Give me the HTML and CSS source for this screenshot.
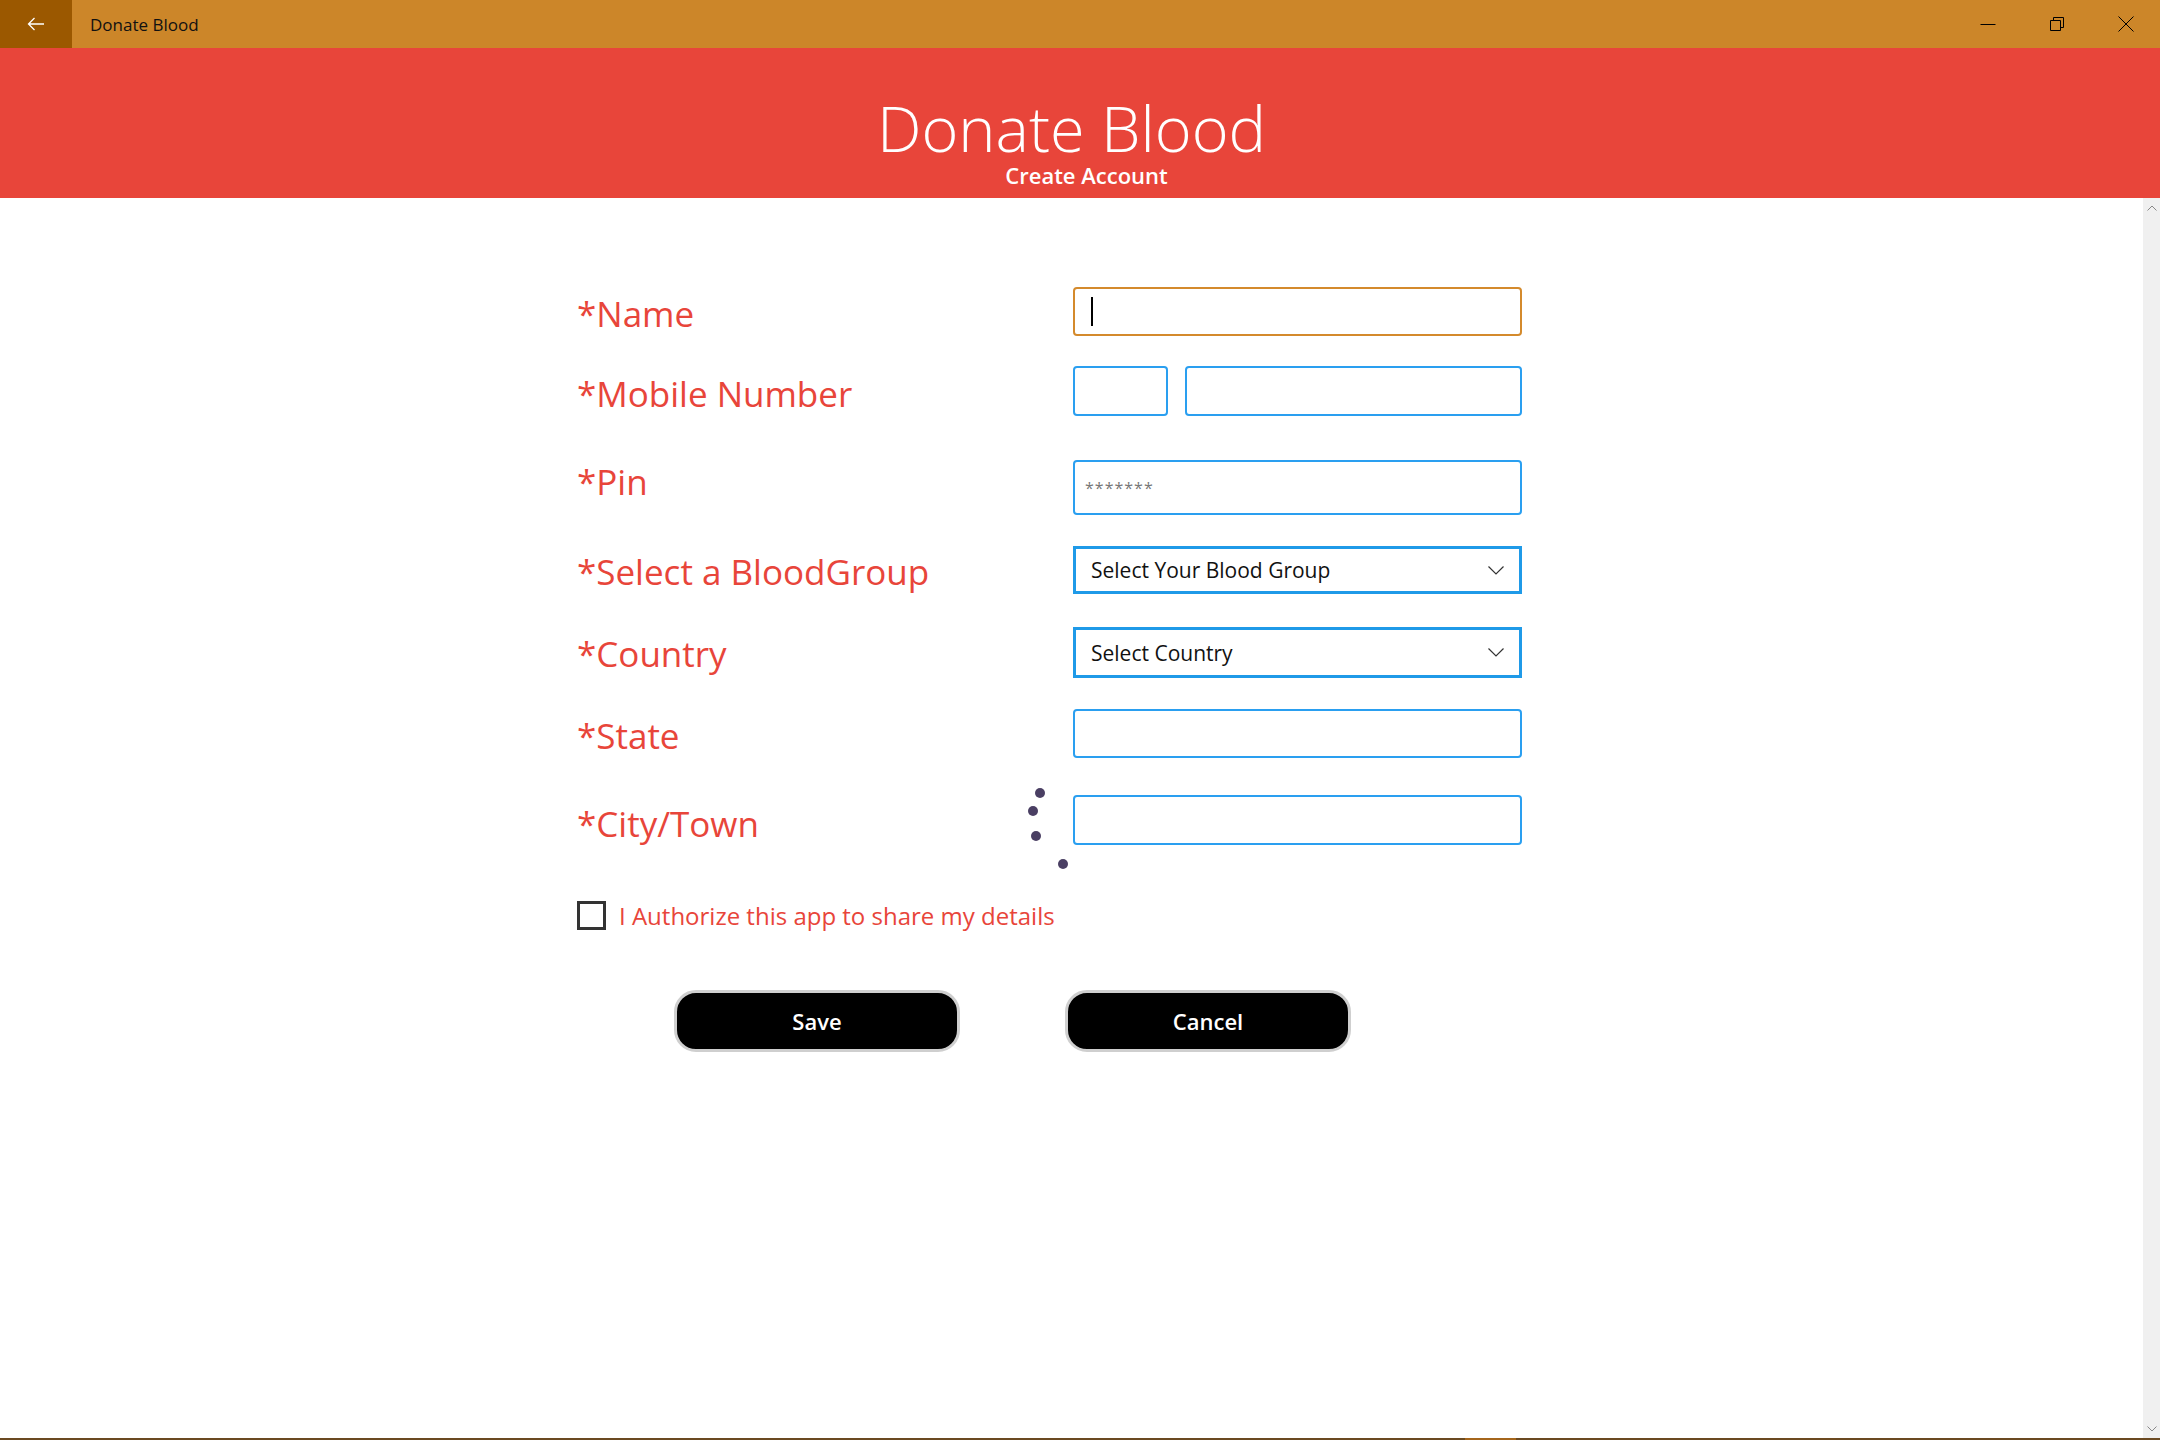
FILE: index.html
```html
<!DOCTYPE html>
<html lang="en">
<head>
    <meta charset="UTF-8">
    <meta name="viewport" content="width=device-width, initial-scale=1.0">
    <title>Donate Blood</title>
    <link rel="stylesheet" href="styles.css">
</head>
<body>
    <div class="window">
        <div class="titlebar">
            <div class="back-btn">
                <svg width="18" height="14" viewBox="0 0 18 14"><path d="M17 7H1.5M7.5 1L1.5 7l6 6" fill="none" stroke="#fff" stroke-width="1.3"/></svg>
            </div>
            <span class="app-title">Donate Blood</span>
            <div class="caption-buttons">
                <div class="caption-btn">
                    <svg width="16" height="16" viewBox="0 0 16 16"><path d="M0.5 8.5h15" stroke="#000" stroke-width="1"/></svg>
                </div>
                <div class="caption-btn">
                    <svg width="16" height="16" viewBox="0 0 16 16"><path d="M1.5 4.5h10v10h-10z M4.5 4.5v-3h10v10h-3" fill="none" stroke="#000" stroke-width="1"/></svg>
                </div>
                <div class="caption-btn">
                    <svg width="16" height="16" viewBox="0 0 16 16"><path d="M0.5 0.5l15 15M15.5 0.5l-15 15" stroke="#000" stroke-width="1"/></svg>
                </div>
            </div>
        </div>

        <header class="banner">
            <h1>Donate Blood</h1>
            <p>Create Account</p>
        </header>

        <div class="body-area">
            <main class="page">
                <form class="signup">
                    <div class="row row-name">
                        <label>*Name</label>
                        <div class="field focused"><span class="caret"></span></div>
                    </div>
                    <div class="row row-mobile">
                        <label>*Mobile Number</label>
                        <div class="mobile-fields">
                            <div class="field code"></div>
                            <div class="field"></div>
                        </div>
                    </div>
                    <div class="row row-pin">
                        <label>*Pin</label>
                        <div class="field"><span class="placeholder">*******</span></div>
                    </div>
                    <div class="row row-blood">
                        <label>*Select a BloodGroup</label>
                        <div class="combo">
                            <span>Select Your Blood Group</span>
                            <svg width="16" height="9" viewBox="0 0 16 9"><path d="M0.5 0.5l7.5 7.5 7.5-7.5" fill="none" stroke="#333" stroke-width="1.2"/></svg>
                        </div>
                    </div>
                    <div class="row row-country">
                        <label>*Country</label>
                        <div class="combo">
                            <span>Select Country</span>
                            <svg width="16" height="9" viewBox="0 0 16 9"><path d="M0.5 0.5l7.5 7.5 7.5-7.5" fill="none" stroke="#333" stroke-width="1.2"/></svg>
                        </div>
                    </div>
                    <div class="row row-state">
                        <label>*State</label>
                        <div class="field"></div>
                    </div>
                    <div class="row row-city">
                        <label>*City/Town</label>
                        <div class="field"></div>
                        <div class="spinner">
                            <span class="dot" style="left: 458px; top: -7px;"></span>
                            <span class="dot" style="left: 451px; top: 11px;"></span>
                            <span class="dot" style="left: 454px; top: 36px;"></span>
                            <span class="dot" style="left: 481px; top: 64px;"></span>
                        </div>
                    </div>

                    <div class="agree">
                        <span class="checkbox"></span>
                        <span class="agree-text">I Authorize this app to share my details</span>
                    </div>

                    <div class="actions">
                        <button type="button" class="btn">Save</button>
                        <button type="button" class="btn">Cancel</button>
                    </div>
                </form>
            </main>
            <div class="scrollbar">
                <svg width="10" height="6" viewBox="0 0 10 6"><path d="M0.5 5.5l4.5-4.5 4.5 4.5" fill="none" stroke="#888" stroke-width="1"/></svg>
                <svg width="10" height="6" viewBox="0 0 10 6"><path d="M0.5 0.5l4.5 4.5 4.5-4.5" fill="none" stroke="#888" stroke-width="1"/></svg>
            </div>
        </div>
        <div class="taskbar-edge"><span class="edge-mark"></span></div>
    </div>
</body>
</html>
```

FILE: styles.css
```css
body {
    margin: 0;
    background-color: white;
    font-family: "Open Sans", "Noto Sans", sans-serif;
    overflow: hidden;
}
.window {
    display: flex;
    flex-direction: column;
    height: 1440px;
}

/* title bar */
.titlebar {
    display: flex;
    align-items: center;
    height: 48px;
    background-color: #cc8629;
    flex-shrink: 0;
}
.back-btn {
    width: 72px;
    height: 48px;
    background-color: #9b5800;
    display: flex;
    align-items: center;
    justify-content: center;
}
.app-title {
    margin-left: 18px;
    font-size: 17px;
    color: #111;
}
.caption-buttons {
    margin-left: auto;
    display: flex;
}
.caption-btn {
    width: 69px;
    height: 48px;
    display: flex;
    align-items: center;
    justify-content: center;
}

/* red banner */
.banner {
    height: 150px;
    background-color: #e8453a;
    color: white;
    text-align: center;
    padding-right: 17px;
    flex-shrink: 0;
    box-sizing: border-box;
    padding-top: 45px;
}
.banner h1 {
    margin: 0;
    font-size: 63px;
    font-weight: 300;
    line-height: 70px;
}
.banner p {
    margin: -3px 0 0 30px;
    font-size: 22px;
    font-weight: 600;
    line-height: 30px;
}

/* content */
.body-area {
    flex: 1;
    display: flex;
}
.page {
    flex: 1;
}
.scrollbar {
    width: 17px;
    background-color: #f0f0f0;
    display: flex;
    flex-direction: column;
    justify-content: space-between;
    align-items: center;
    padding: 7px 0 6px;
}
.taskbar-edge {
    height: 2px;
    background-color: #6b4a22;
    flex-shrink: 0;
    position: relative;
}
.edge-mark {
    position: absolute;
    left: 1465px;
    width: 51px;
    height: 2px;
    background-color: #a5661c;
}

.signup {
    margin-left: 577px;
    padding-top: 89px;
    width: 945px;
}
.row {
    display: grid;
    grid-template-columns: 496px 449px;
    align-items: center;
    position: relative;
}
.row label {
    color: #e8453a;
    font-size: 35px;
    line-height: 40px;
    padding-top: 4px;
}
.field {
    box-sizing: border-box;
    height: 49px;
    border: 2px solid #2a9ff0;
    border-radius: 4px;
    display: flex;
    align-items: center;
    padding-left: 10px;
}
.field.focused {
    border-color: #d48a2c;
}
.caret {
    width: 2px;
    height: 29px;
    background-color: black;
    margin-left: 6px;
}
.placeholder {
    color: #777;
    font-size: 16px;
    letter-spacing: 1px;
}
.mobile-fields {
    display: flex;
    gap: 17px;
}
.mobile-fields .field {
    flex: 1;
    height: 50px;
}
.mobile-fields .field.code {
    flex: 0 0 95px;
}
.combo {
    box-sizing: border-box;
    border: 3px solid #1f9ae8;
    height: 48px;
    display: flex;
    align-items: center;
    justify-content: space-between;
    padding: 0 15px 0 15px;
    font-size: 21px;
    color: #111;
}

.row-name { margin-bottom: 30px; }
.row-mobile { margin-bottom: 44px; }
.row-mobile label { padding-top: 6px; }
.row-pin { margin-bottom: 31px; }
.row-pin .field { height: 55px; }
.row-pin label { padding-top: 0; margin-top: -12px; }
.row-blood { margin-bottom: 33px; }
.row-country { margin-bottom: 31px; }
.row-country .combo { height: 51px; }
.row-country label { padding-top: 2px; }
.row-state { margin-bottom: 37px; }
.row-city .field { height: 50px; }
.row-city label { padding-top: 8px; }

.spinner {
    position: absolute;
    left: 0;
    top: 0;
}
.dot {
    position: absolute;
    width: 10px;
    height: 10px;
    border-radius: 50%;
    background-color: #4a3f63;
}

.agree {
    display: flex;
    align-items: center;
    margin-top: 54px;
}
.checkbox {
    box-sizing: border-box;
    width: 29px;
    height: 29px;
    border: 3px solid #333;
}
.agree-text {
    margin-left: 13px;
    color: #e8453a;
    font-size: 24px;
    line-height: 33px;
}

.actions {
    display: flex;
    gap: 105px;
    margin-top: 58px;
    padding-left: 97px;
}
.btn {
    width: 286px;
    height: 62px;
    background-color: black;
    color: white;
    border: 3px solid #cfcfcf;
    border-radius: 22px;
    font-family: "Open Sans", "Noto Sans", sans-serif;
    font-size: 22px;
    font-weight: 600;
    cursor: pointer;
}
```
